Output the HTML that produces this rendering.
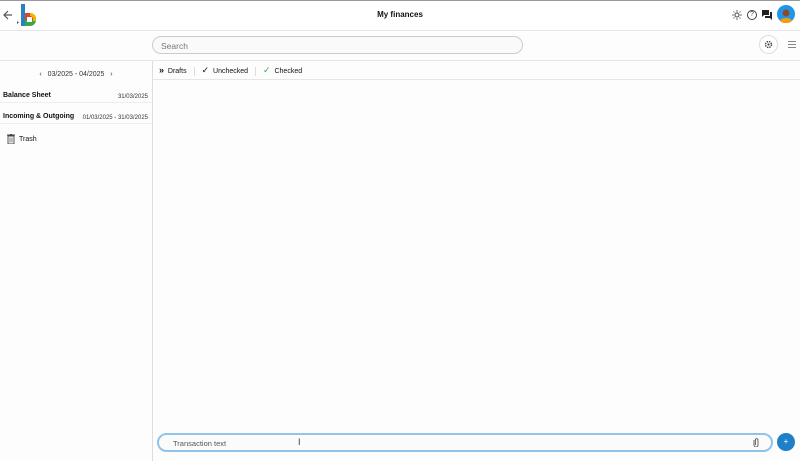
<!DOCTYPE html>
<html><head><meta charset="utf-8"><style>
*{box-sizing:border-box;margin:0;padding:0}
body{width:800px;height:461px;overflow:hidden;background:#fdfdfd;font-family:"Liberation Sans",sans-serif;color:#111;position:relative}
.abs{position:absolute}
.line{position:absolute;background:#e6e6e6}
</style></head><body>
<div class="abs" style="left:0;top:0;width:800px;height:1px;background:#999"></div>
<div class="abs" style="left:0;top:1px;width:800px;height:29px;background:#fff"></div>
<svg class="abs" style="left:3px;top:10px" width="10" height="10" viewBox="0 0 10 10"><path d="M9 5H1M5 1L1 5l4 4" stroke="#555" stroke-width="1.2" fill="none"/></svg>
<svg class="abs" style="left:16px;top:3px" width="24" height="24" viewBox="0 0 24 24">
<path d="M1 21l2-1.5-2-1.5z" fill="#555"/>
<rect x="5" y="1" width="4" height="22" fill="#2b7fc3"/>
<path d="M9 10h5a6 6 0 0 1 6 6v1H9z" fill="#d8442f"/>
<path d="M9 17h11a6 6 0 0 1-6 6H9z" fill="#3aa843"/>
<path d="M14 10a6 6 0 0 1 6 6v2h-3v-2a3 3 0 0 0-3-3z" fill="#f4b400"/>
<rect x="11" y="14" width="5" height="5" fill="#fff"/>
</svg>
<div class="abs" style="left:0;width:800px;top:10px;text-align:center;font-size:8px;font-weight:bold">My finances</div>
<svg class="abs" style="left:732px;top:10px" width="10" height="10" viewBox="0 0 10 10"><circle cx="5" cy="5" r="2" fill="none" stroke="#444"/><path d="M5 0v2M5 8v2M0 5h2M8 5h2M1.5 1.5l1 1M7.5 7.5l1 1M1.5 8.5l1-1M7.5 2.5l1-1" stroke="#444" stroke-width=".8"/></svg>
<div class="abs" style="left:747px;top:10px;width:10px;height:10px;border:1px solid #444;border-radius:50%;font-size:7px;line-height:8px;text-align:center;color:#444">?</div>
<svg class="abs" style="left:762px;top:10px" width="10" height="10" viewBox="0 0 10 10"><path d="M0 0h7v5H2L0 7z" fill="#222"/><path d="M8 2h2v8L8 8H3V6h5z" fill="#222"/></svg>
<svg class="abs" style="left:777px;top:5px" width="18" height="18" viewBox="0 0 18 18"><circle cx="9" cy="9" r="9" fill="#2196e8"/><path d="M3 16c1-4 11-4 12 0a9 9 0 0 1-12 0z" fill="#f39c12"/><circle cx="9" cy="8" r="3.5" fill="#8a4b2a"/></svg>
<div class="line" style="left:0;top:30px;width:800px;height:1px"></div>
<div class="abs" style="left:152px;top:36px;width:371px;height:18px;border:1px solid #ccc;border-radius:9px;background:#fafafa;font-size:8.5px;color:#777;padding:4px 8px">Search</div>
<div class="abs" style="left:759px;top:35px;width:19px;height:19px;border:1px solid #ddd;border-radius:50%;background:#fff"></div>
<svg class="abs" style="left:764px;top:40px" width="9" height="9" viewBox="0 0 10 10"><circle cx="5" cy="5" r="3.3" fill="none" stroke="#444" stroke-width="1.6" stroke-dasharray="1.6 1"/><circle cx="5" cy="5" r="1.2" fill="#444"/></svg>
<div class="abs" style="left:788px;top:41px;width:8px;height:7px;border-top:1px solid #888;border-bottom:1px solid #888"></div>
<div class="abs" style="left:788px;top:44px;width:8px;height:1px;background:#888"></div>
<div class="line" style="left:0;top:60px;width:800px;height:1px"></div>
<div class="line" style="left:152px;top:61px;width:1px;height:400px;background:#ddd"></div>
<div class="abs" style="left:0;top:71px;width:152px;text-align:center;font-size:7px;color:#333">‹&nbsp;&nbsp;&nbsp;03/2025 - 04/2025&nbsp;&nbsp;&nbsp;›</div>
<div class="abs" style="left:3px;top:92px;font-size:7px;font-weight:bold">Balance Sheet</div>
<div class="abs" style="right:652px;top:94px;font-size:6px;color:#333">31/03/2025</div>
<div class="line" style="left:0;top:102px;width:152px;height:1px;background:#eee"></div>
<div class="abs" style="left:3px;top:113px;font-size:7px;font-weight:bold">Incoming &amp; Outgoing</div>
<div class="abs" style="right:652px;top:115px;font-size:6px;color:#333">01/03/2025 - 31/03/2025</div>
<div class="line" style="left:0;top:123px;width:152px;height:1px;background:#eee"></div>
<svg class="abs" style="left:7px;top:134px" width="8" height="10" viewBox="0 0 8 10"><path d="M0 1h8M3 0h2M1 2h6v8H1z" fill="none" stroke="#444" stroke-width=".9"/><path d="M3 3.5v5M5 3.5v5" stroke="#444" stroke-width=".7"/></svg>
<div class="abs" style="left:19px;top:136px;font-size:7px">Trash</div>
<div class="abs" style="left:159px;top:65px;font-size:7px;white-space:nowrap;line-height:10px">
<span style="font-weight:bold;font-size:9px">»</span>&nbsp; Drafts<span style="display:inline-block;width:1px;height:9px;background:#ddd;margin:0 7px;vertical-align:middle"></span><span style="font-size:9px">✓</span>&nbsp; Unchecked<span style="display:inline-block;width:1px;height:9px;background:#ddd;margin:0 7px;vertical-align:middle"></span><span style="color:#3aa843;font-size:9px">✓</span>&nbsp; Checked</div>
<div class="line" style="left:153px;top:79px;width:647px;height:1px"></div>
<div class="abs" style="left:157px;top:433px;width:616px;height:19px;border:2px solid #8fc3ea;border-radius:10px;background:#fbfbfb;font-size:7.5px;color:#555;padding:4px 14px">Transaction text</div>
<div class="abs" style="left:298px;top:437px;font-size:9px;color:#333">I</div>
<svg class="abs" style="left:753px;top:438px" width="6" height="9" viewBox="0 0 6 9"><path d="M1 2v5a2 2 0 0 0 4 0V2a1.3 1.3 0 0 0-2.6 0v5" fill="none" stroke="#555" stroke-width=".9"/></svg>
<div class="abs" style="left:777px;top:433px;width:18px;height:18px;border-radius:50%;background:#1f7fc8;color:#fff;font-size:8px;text-align:center;line-height:18px">+</div>
</body></html>
